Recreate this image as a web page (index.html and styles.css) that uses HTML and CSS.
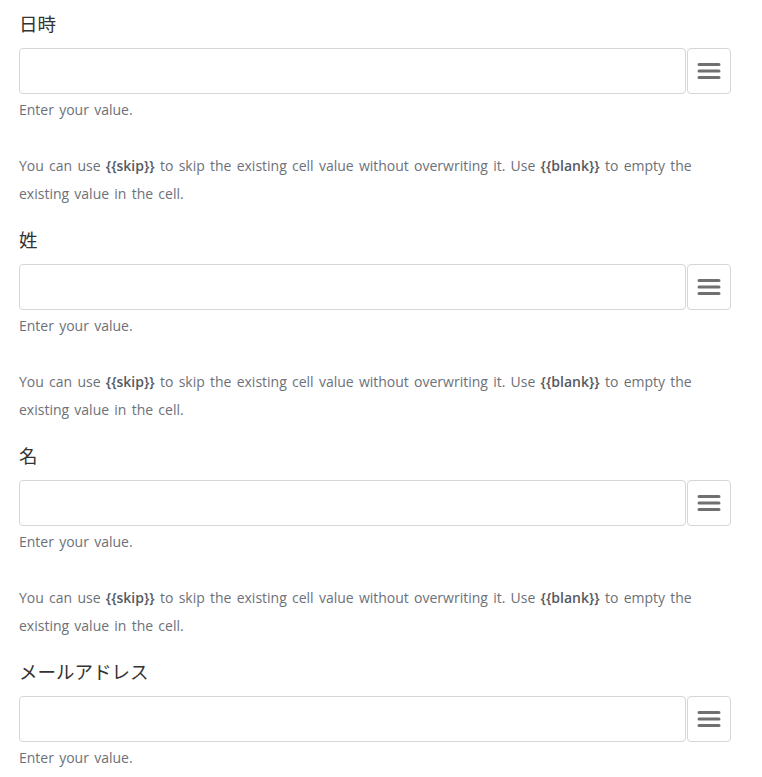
FILE: index.html
```html
<!DOCTYPE html>
<html lang="ja">
<head>
<meta charset="utf-8">
<title>Fields</title>
<link rel="stylesheet" href="styles.css">
</head>
<body>
<div class="form">

	<div class="field">
		<label class="field-label">日時</label>
		<div class="field-row">
			<input type="text" class="field-input">
			<button class="menu-btn" type="button">
				<svg width="24" height="18" viewBox="0 0 24 18"><path d="M2 2.5h20M2 9h20M2 15.5h20" stroke="#707070" stroke-width="3" stroke-linecap="round"/></svg>
			</button>
		</div>
		<div class="field-help">Enter your value.</div>
		<p class="field-note">You can use <span class="tag">{{skip}}</span> to skip the existing cell value without overwriting it. Use <span class="tag">{{blank}}</span> to empty the existing value in the cell.</p>
	</div>

	<div class="field">
		<label class="field-label">姓</label>
		<div class="field-row">
			<input type="text" class="field-input">
			<button class="menu-btn" type="button">
				<svg width="24" height="18" viewBox="0 0 24 18"><path d="M2 2.5h20M2 9h20M2 15.5h20" stroke="#707070" stroke-width="3" stroke-linecap="round"/></svg>
			</button>
		</div>
		<div class="field-help">Enter your value.</div>
		<p class="field-note">You can use <span class="tag">{{skip}}</span> to skip the existing cell value without overwriting it. Use <span class="tag">{{blank}}</span> to empty the existing value in the cell.</p>
	</div>

	<div class="field">
		<label class="field-label">名</label>
		<div class="field-row">
			<input type="text" class="field-input">
			<button class="menu-btn" type="button">
				<svg width="24" height="18" viewBox="0 0 24 18"><path d="M2 2.5h20M2 9h20M2 15.5h20" stroke="#707070" stroke-width="3" stroke-linecap="round"/></svg>
			</button>
		</div>
		<div class="field-help">Enter your value.</div>
		<p class="field-note">You can use <span class="tag">{{skip}}</span> to skip the existing cell value without overwriting it. Use <span class="tag">{{blank}}</span> to empty the existing value in the cell.</p>
	</div>

	<div class="field">
		<label class="field-label">メールアドレス</label>
		<div class="field-row">
			<input type="text" class="field-input">
			<button class="menu-btn" type="button">
				<svg width="24" height="18" viewBox="0 0 24 18"><path d="M2 2.5h20M2 9h20M2 15.5h20" stroke="#707070" stroke-width="3" stroke-linecap="round"/></svg>
			</button>
		</div>
		<div class="field-help">Enter your value.</div>
	</div>

</div>
</body>
</html>
```

FILE: styles.css
```css
body {
	margin: 0;
	background: #ffffff;
	font-family: "Open Sans", "Noto Sans CJK JP", sans-serif;
}

.form {
	padding: 10px 31px 0 19px;
}

.field {
	margin-bottom: 18px;
}

.field-label {
	display: block;
	font-family: "Noto Sans CJK JP", sans-serif;
	font-size: 18.5px;
	line-height: 26px;
	color: #333333;
	margin-bottom: 12px;
}

.field-row {
	display: flex;
	gap: 1px;
	height: 46px;
}

.field-input {
	flex: 1;
	margin: 0;
	border: 1px solid #d3d6db;
	border-radius: 4px;
	box-sizing: border-box;
	height: 46px;
	outline: none;
}

.menu-btn {
	width: 44px;
	height: 46px;
	margin: 0;
	padding: 0;
	border: 1px solid #d3d6db;
	border-radius: 4px;
	background: #ffffff;
	box-sizing: border-box;
	display: flex;
	align-items: center;
	justify-content: center;
}

.field-help {
	margin-top: 6px;
	font-size: 14px;
	line-height: 20px;
	word-spacing: 1.6px;
	color: #6c7179;
}

.field-note {
	margin: 32px 0 0 0;
	font-size: 14px;
	line-height: 28px;
	word-spacing: 1.6px;
	color: #6c7179;
}

.tag {
	font-weight: 600;
	color: #555a61;
}
```
